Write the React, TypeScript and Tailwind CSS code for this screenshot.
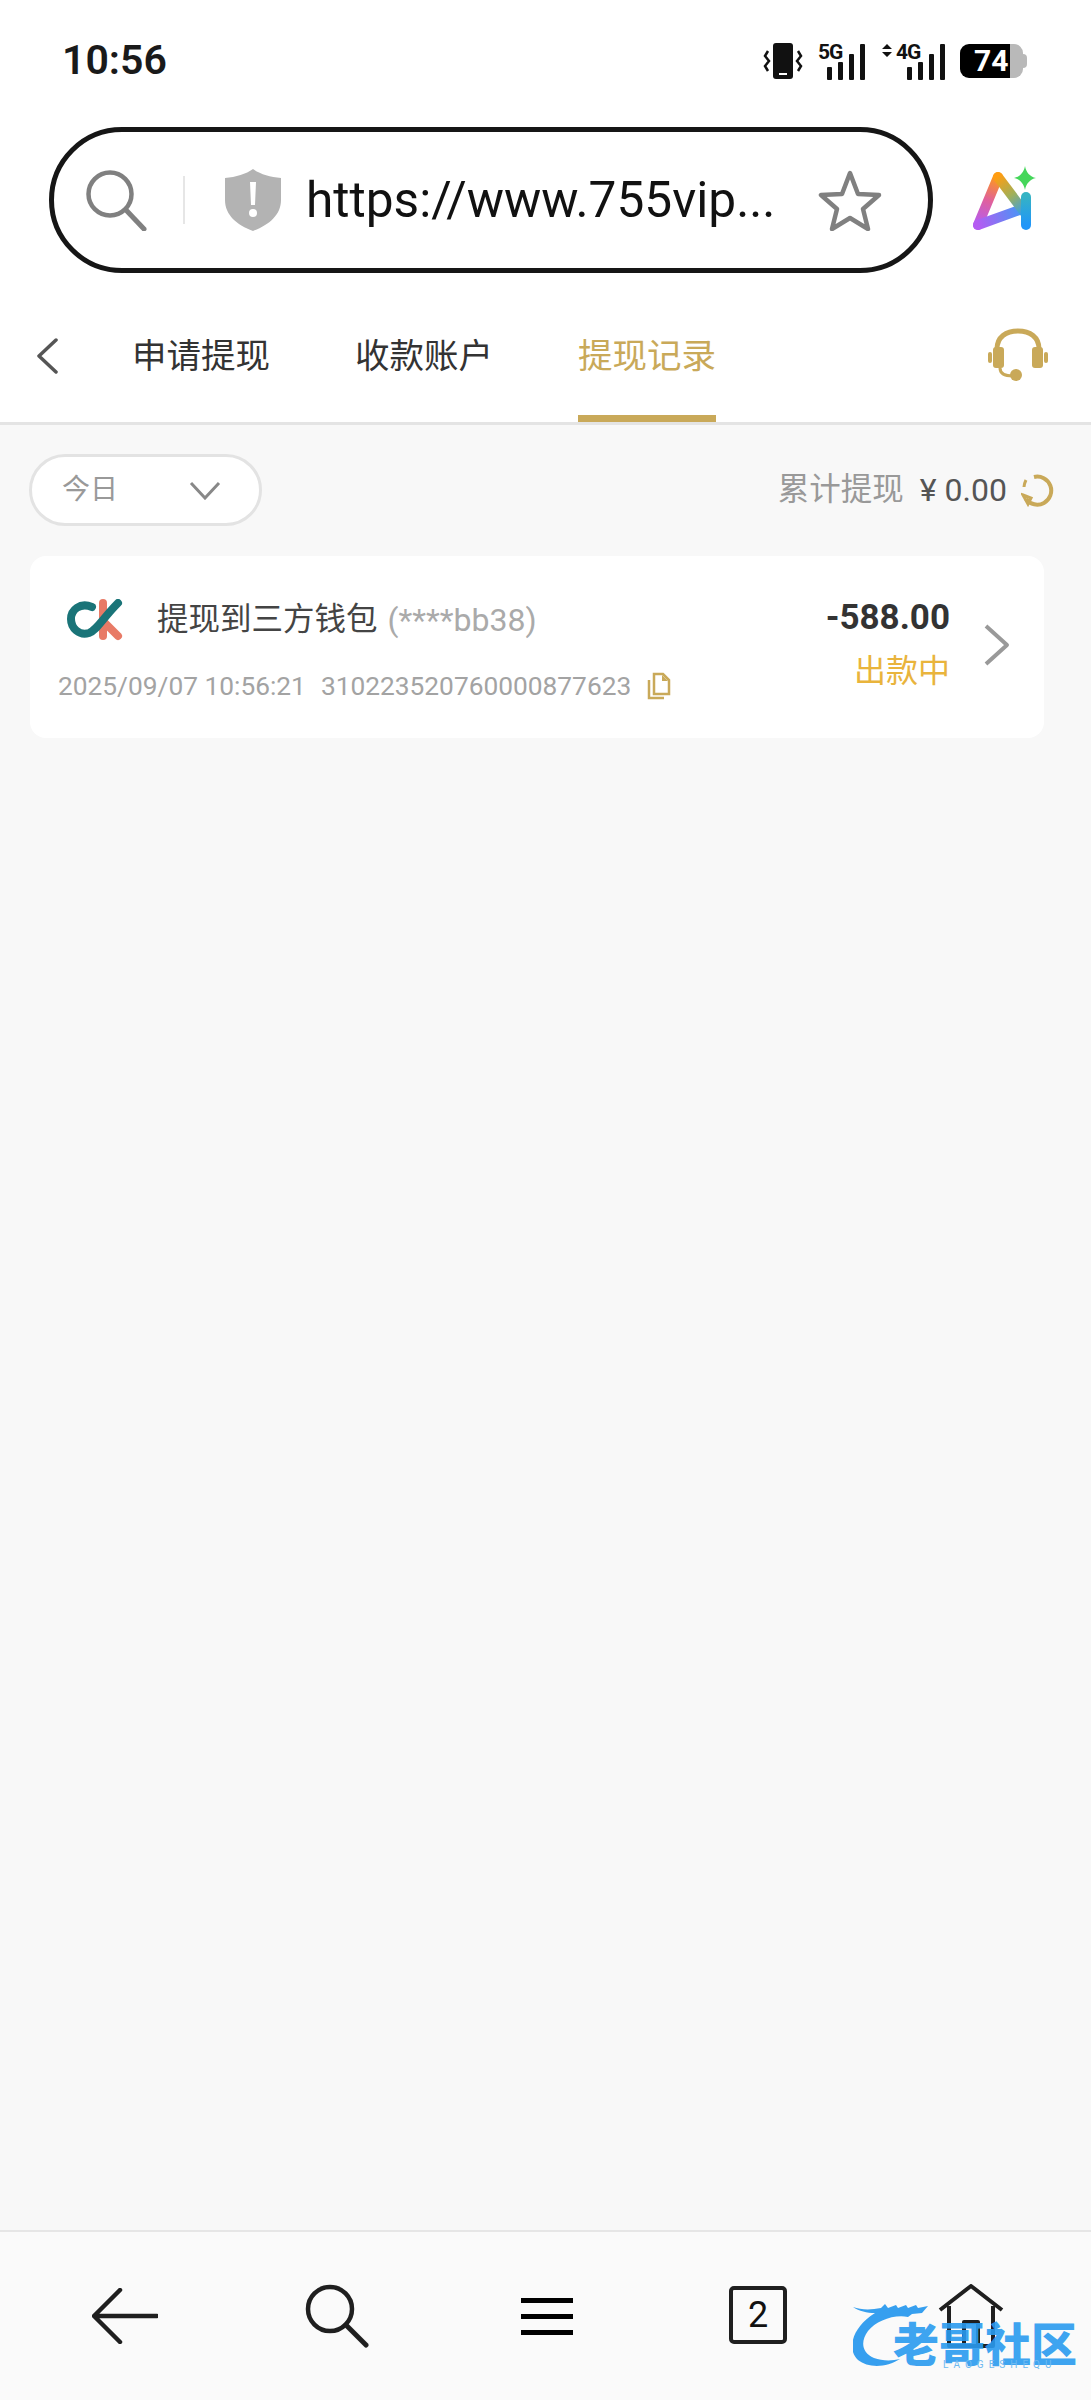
const cjk = "font-['Roboto','Noto_Sans_CJK_SC',sans-serif]";

function VibrateIcon() {
  return (
    <svg width="40" height="38" viewBox="0 0 40 38" fill="none">
      <rect x="10" y="1" width="20" height="36" rx="3" fill="#111" />
      <rect x="16" y="31" width="8" height="2" fill="#fff" />
      <path d="M5 9 2 14l4 5-4 5 3 5" stroke="#111" strokeWidth="2.5" />
      <path d="M35 9l3 5-4 5 4 5-3 5" stroke="#111" strokeWidth="2.5" />
    </svg>
  );
}

function SignalIcon({ label, arrows }: { label: string; arrows?: boolean }) {
  const offset = arrows ? 17 : 0;
  return (
    <svg className="overflow-visible" width={arrows ? 64 : 48} height="38" viewBox={`0 0 ${arrows ? 64 : 48} 38`}>
      {arrows && <path d="M1 7l5-5 5 5zM1 10l5 5 5-5z" fill="#111" />}
      <text x={arrows ? 15 : 0} y="17" fontFamily="Roboto" fontWeight="700" fontSize="21" fill="#111" letterSpacing="-1">
        {label}
      </text>
      <rect x={offset + 9} y="25" width="5" height="13" rx="1" fill="#111" />
      <rect x={offset + 20} y="20" width="5" height="18" rx="1" fill="#111" />
      <rect x={offset + 31} y="12" width="5" height="26" rx="1" fill="#111" />
      <rect x={offset + 42} y="2" width="5" height="36" rx="1" fill="#111" />
    </svg>
  );
}

function BatteryIcon() {
  return (
    <div className="relative flex h-[34px] w-[67px]">
      <div className="w-[50px] rounded-l-[9px] bg-black" />
      <div className="w-[13px] rounded-r-[9px] bg-[#b9b9b9]" />
      <div className="my-auto h-[14px] w-[4px] rounded-r-full bg-[#b9b9b9]" />
      <span className="absolute left-[14px] top-0 font-['Roboto',sans-serif] text-[30px] font-bold leading-[34px] text-white">
        74
      </span>
    </div>
  );
}

function AiLogo() {
  return (
    <svg width="72" height="68" viewBox="0 0 72 68" fill="none">
      <defs>
        <linearGradient id="aiLeft" x1="7" y1="59" x2="27" y2="10" gradientUnits="userSpaceOnUse">
          <stop offset="0" stopColor="#b45cf2" />
          <stop offset="0.5" stopColor="#e0609c" />
          <stop offset="1" stopColor="#ff9d12" />
        </linearGradient>
        <linearGradient id="aiBase" x1="7" y1="59" x2="55" y2="42" gradientUnits="userSpaceOnUse">
          <stop offset="0" stopColor="#b45cf2" />
          <stop offset="1" stopColor="#3b9cf6" />
        </linearGradient>
        <linearGradient id="aiRight" x1="27" y1="10" x2="55" y2="48" gradientUnits="userSpaceOnUse">
          <stop offset="0" stopColor="#ff9d12" />
          <stop offset="0.5" stopColor="#9fb05a" />
          <stop offset="1" stopColor="#2a9cf8" />
        </linearGradient>
        <linearGradient id="aiStem" x1="55" y1="30" x2="55" y2="59" gradientUnits="userSpaceOnUse">
          <stop offset="0" stopColor="#35b3c4" />
          <stop offset="1" stopColor="#2196f8" />
        </linearGradient>
      </defs>
      <path d="M7 59 27 11" stroke="url(#aiLeft)" strokeWidth="10" strokeLinecap="round" />
      <path d="M7 59 54 42" stroke="url(#aiBase)" strokeWidth="10" strokeLinecap="round" />
      <path d="M27 11 54 47" stroke="url(#aiRight)" strokeWidth="10" strokeLinecap="round" />
      <path d="M55 31v28" stroke="url(#aiStem)" strokeWidth="10" strokeLinecap="round" />
      <path d="M54 0c1 6 5 11 11 12-6 1-10 6-11 12-1-6-5-11-11-12 6-1 10-6 11-12z" fill="#45d65a" />
    </svg>
  );
}

function Headset() {
  return (
    <svg width="64" height="54" viewBox="0 0 64 54" fill="none">
      <path d="M11 28V21C11 9 20 3 32 3s21 6 21 18v7" stroke="#c9a959" strokeWidth="5" />
      <rect x="7" y="19" width="11" height="21" rx="3" fill="#c9a959" />
      <rect x="46" y="19" width="11" height="21" rx="3" fill="#c9a959" />
      <rect x="2" y="24" width="4" height="11" rx="2" fill="#c9a959" />
      <rect x="58" y="24" width="4" height="11" rx="2" fill="#c9a959" />
      <path d="M14 40c0 6 5 8 13 8" stroke="#c9a959" strokeWidth="3" />
      <circle cx="30" cy="47" r="6" fill="#c9a959" />
    </svg>
  );
}

function CkLogo() {
  return (
    <svg width="56" height="42" viewBox="0 0 56 42" fill="none">
      <path d="M36 4v33" stroke="#e87a66" strokeWidth="8" strokeLinecap="round" />
      <path d="M36 22l15 15" stroke="#e87a66" strokeWidth="8" strokeLinecap="round" />
      <path d="M25 8C13 3 4 11 4 20s8 17 18 14c8-3 14-15 29-30" stroke="#1a7478" strokeWidth="8" strokeLinecap="round" />
    </svg>
  );
}

function Watermark() {
  return (
    <div className="absolute left-[853px] top-[2300px] h-[74px] w-[224px] opacity-90">
      <svg className="absolute left-0 top-0" width="110" height="74" viewBox="0 0 110 74" fill="none">
        <path
          d="M0 7c8 3 18 3 28 1l4-4 3 4 8-3 2 3 8-3 2 3 8-3 2 3 10-2-6 7-10 1-4 3c-14-3-32 4-40 14-8 11-6 22 6 27 8 3 18 3 26 1-14 9-32 9-42 1C-6 50-2 28 22 13 14 13 6 11 0 7z"
          fill="#2196ee"
        />
      </svg>
      <span className="absolute left-[40px] top-[24px] whitespace-nowrap font-['Noto_Sans_CJK_SC',sans-serif] text-[46px] font-black leading-[35px] text-[#2a9bf0]">
        老哥社区
      </span>
      <span className="absolute left-[90px] top-[60px] font-['Roboto',sans-serif] text-[10px] leading-[10px] tracking-[5px] text-[#5fb4f0]">
        LAOGESHEQU
      </span>
    </div>
  );
}

export default function App() {
  return (
    <div className={`relative flex h-[2400px] w-[1091px] flex-col overflow-hidden bg-[#f8f8f8] ${cjk}`}>
      <div className="bg-white">
        {/* status bar */}
        <div className="flex h-[127px] items-start justify-between pl-[62px] pr-[64px] pt-[40px]">
          <span className="text-[41px] font-semibold leading-[40px] text-[#1a1a1a]">10:56</span>
          <div className="flex items-center gap-[15px] pt-[2px]">
            <VibrateIcon />
            <SignalIcon label="5G" />
            <SignalIcon label="4G" arrows />
            <BatteryIcon />
          </div>
        </div>

        {/* browser address bar */}
        <div className="flex items-center pl-[49px]">
          <div className="flex h-[146px] w-[884px] shrink-0 items-center rounded-full border-[5px] border-[#161616] pl-[31px]">
            <svg width="62" height="62" viewBox="0 0 62 62" fill="none">
              <circle cx="25" cy="25" r="21.5" stroke="#808080" strokeWidth="4.5" />
              <path d="M41 41l18 19" stroke="#808080" strokeWidth="5" strokeLinecap="round" />
            </svg>
            <div className="ml-[36px] h-[48px] w-[2px] bg-[#e6e6e6]" />
            <svg className="ml-[40px]" width="56" height="62" viewBox="0 0 56 62">
              <path d="M28 0c7 5 17 8 28 9v22c0 15-12 25-28 31C12 56 0 46 0 31V9c11-1 21-4 28-9z" fill="#b3b3b3" />
              <path d="M25 13h6l-1 23h-4zM28 40a4 4 0 1 1 0 8 4 4 0 0 1 0-8z" fill="#fff" />
            </svg>
            <span className="ml-[25px] font-['Roboto',sans-serif] text-[49.6px] leading-[60px] text-[#111]">
              https://www.755vip...
            </span>
            <svg className="ml-[42px]" width="66" height="62" viewBox="0 0 66 62" fill="none">
              <path d="M33 4l8 21 21 1-16 14 5 20-18-11-18 11 5-20L4 26l21-1z" stroke="#808080" strokeWidth="4.5" strokeLinejoin="round" />
            </svg>
          </div>
          <div className="ml-[38px]">
            <AiLogo />
          </div>
        </div>

        {/* tabs */}
        <div className="mt-[7px] flex h-[145px] items-stretch border-b-[3px] border-[#e4e4e4] pl-[35px] pr-[41px]">
          <svg className="mt-[58px]" width="24" height="36" viewBox="0 0 24 36" fill="none">
            <path d="M21 2 4 18l17 16" stroke="#555" strokeWidth="3.5" strokeLinecap="round" strokeLinejoin="round" />
          </svg>
          <div className="ml-[73px] flex gap-[85px]">
            <span className="pt-[52px] text-[34.5px] leading-[48px] text-[#333]">申请提现</span>
            <span className="pt-[52px] text-[34.5px] leading-[48px] text-[#333]">收款账户</span>
            <span className="h-full border-b-[7px] border-[#c9a959] pt-[52px] text-[34.5px] leading-[48px] text-[#c9a959]">
              提现记录
            </span>
          </div>
          <div className="ml-auto pt-[48px]">
            <Headset />
          </div>
        </div>
      </div>

      {/* filter row */}
      <div className="mt-[29px] flex items-center pl-[29px] pr-[36px]">
        <div className="flex h-[72px] w-[233px] items-center justify-between rounded-full border-[3px] border-[#e3e3e3] bg-white pl-[30px] pr-[38px]">
          <span className="text-[28px] text-[#999]">今日</span>
          <svg width="32" height="20" viewBox="0 0 32 20" fill="none">
            <path d="M2 3l14 15L30 3" stroke="#888" strokeWidth="3" />
          </svg>
        </div>
        <span className="ml-auto text-[31.5px] text-[#999]">累计提现</span>
        <span className="ml-[16px] text-[32px] text-[#555]">¥ 0.00</span>
        <svg className="ml-[14px]" width="34" height="34" viewBox="0 0 34 34" fill="none">
          <path d="M13 4A14 14 0 1 1 5 26" stroke="#c9a959" strokeWidth="4" />
          <path d="M3 14c0-3 1-5 2-7M2 22l8 3-3 6z" stroke="#c9a959" strokeWidth="3" />
        </svg>
      </div>

      {/* withdrawal record */}
      <div className="ml-[30px] mt-[30px] flex h-[182px] w-[1014px] items-stretch rounded-[16px] bg-white pl-[28px] pr-[33px]">
        <div className="flex flex-1 flex-col">
          <div className="mt-[42px] flex h-[44px] items-center">
            <div className="ml-[9px]">
              <CkLogo />
            </div>
            <span className="ml-[34px] text-[31.5px] leading-[44px] text-[#444]">提现到三方钱包</span>
            <span className="ml-[10px] text-[32px] leading-[44px] text-[#aaa]">(****bb38)</span>
          </div>
          <div className="mt-[28px] flex items-center text-[26.3px] leading-[32px] text-[#a3a3a3]">
            <span>2025/09/07 10:56:21</span>
            <span className="ml-[15px]">310223520760000877623</span>
            <svg className="ml-[16px]" width="24" height="28" viewBox="0 0 24 28" fill="none">
              <path d="M7 2h9l6 6v14H7z" stroke="#c9a959" strokeWidth="2.5" />
              <path d="M2 8v18h15" stroke="#c9a959" strokeWidth="2.5" />
              <path d="M15 3v6h6" fill="#c9a959" />
            </svg>
          </div>
        </div>
        <div className="flex flex-col items-end pt-[40px]">
          <span className="text-[35px] font-bold leading-[44px] text-[#333]">-588.00</span>
          <span className="mt-[8px] text-[32px] leading-[46px] text-[#e9b43c]">出款中</span>
        </div>
        <svg className="ml-[33px] mt-[68px]" width="28" height="42" viewBox="0 0 28 42" fill="none">
          <path d="M3 2l21 19L3 40" stroke="#999" strokeWidth="4" strokeLinejoin="round" />
        </svg>
      </div>

      {/* browser bottom bar */}
      <div className="mt-auto flex h-[170px] items-start border-t-[2px] border-[#e6e6e6] bg-[#fafafa] pl-[92px] pt-[52px]">
        <svg className="mt-[4px]" width="66" height="56" viewBox="0 0 66 56" fill="none">
          <path d="M28 2 2 28l26 26M3 28h62" stroke="#1f1f1f" strokeWidth="4.5" strokeLinecap="round" strokeLinejoin="round" />
        </svg>
        <svg className="ml-[147px]" width="64" height="64" viewBox="0 0 64 64" fill="none">
          <circle cx="25" cy="25" r="22" stroke="#1f1f1f" strokeWidth="4.5" />
          <path d="M41 41l20 20" stroke="#1f1f1f" strokeWidth="5" strokeLinecap="round" />
        </svg>
        <div className="ml-[152px] mt-[14px] flex w-[52px] flex-col gap-[11px]">
          <div className="h-[5px] bg-black" />
          <div className="h-[5px] bg-black" />
          <div className="h-[5px] bg-black" />
        </div>
        <div className="ml-[156px] mt-[2px] flex h-[58px] w-[58px] items-center justify-center rounded-[5px] border-[4px] border-[#1f1f1f] font-['Roboto',sans-serif] text-[36px] leading-none text-[#111]">
          2
        </div>
        <svg className="ml-[151px]" width="66" height="64" viewBox="0 0 66 64" fill="none">
          <path d="M2 26 33 2l31 24M11 22v40h44V22M26 62V38h14v24" stroke="#1f1f1f" strokeWidth="4" strokeLinejoin="round" />
        </svg>
      </div>
      <Watermark />
    </div>
  );
}
